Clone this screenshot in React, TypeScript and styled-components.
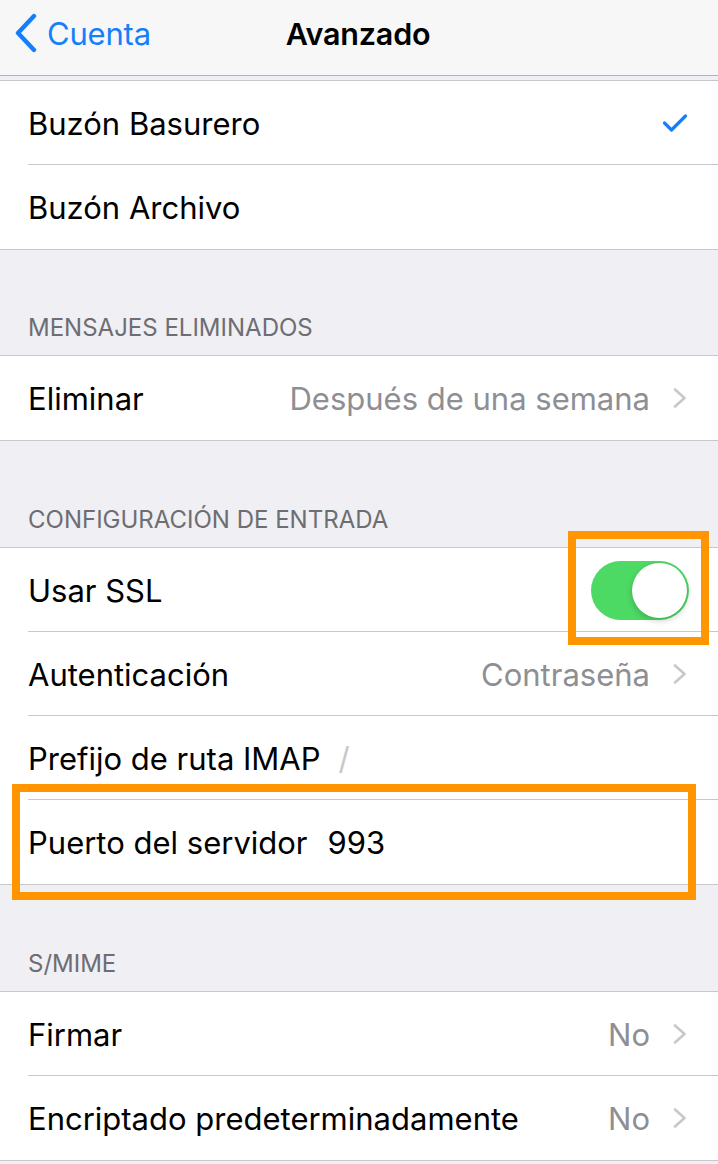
import React from "react";
import styled, { createGlobalStyle } from "styled-components";

const Global = createGlobalStyle`
  html, body { margin: 0; padding: 0; background: #efeff4; }
  body { font-family: Inter, "Liberation Sans", Arial, sans-serif; -webkit-font-smoothing: antialiased; }
  * { box-sizing: border-box; }
`;

const Page = styled.div`
  width: 718px;
  height: 1164px;
  overflow: hidden;
  background: #efeff4;
  display: flex;
  flex-direction: column;
`;

const NavBar = styled.header`
  height: 76px;
  flex: none;
  background: #f7f7f7;
  border-bottom: 1px solid #b4b4b6;
  display: grid;
  grid-template-columns: 1fr auto 1fr;
  align-items: center;
  padding-bottom: 9px;
`;

const BackButton = styled.div`
  display: flex;
  align-items: center;
  gap: 9px;
  padding-left: 14px;
  color: #157efb;
  font-size: 31px;
  letter-spacing: -0.2px;
`;

const Title = styled.div`
  font-size: 30.5px;
  font-weight: 600;
  color: #000;
  letter-spacing: -0.2px;
  transform: translateX(-1px);
`;

const TopGap = styled.div`
  height: 4px;
  flex: none;
`;

const Section = styled.section`
  background: #fff;
  border-top: 1px solid #c8c7cc;
  border-bottom: 1px solid #c8c7cc;
  flex: none;
`;

const SectionHeader = styled.div<{ $h?: number }>`
  height: ${(p) => p.$h ?? 106}px;
  flex: none;
  display: flex;
  align-items: flex-end;
  padding: 0 0 13px 28px;
  color: #6d6d72;
  font-size: 24px;
  letter-spacing: 0;
`;

const Row = styled.div<{ $last?: boolean }>`
  position: relative;
  height: 84px;
  display: flex;
  align-items: center;
  padding: 0 28px 0 28px;
  font-size: 31px;
  color: #000;
  &::after {
    content: "";
    display: ${(p) => (p.$last ? "none" : "block")};
    position: absolute;
    left: 28px;
    right: 0;
    bottom: 0;
    height: 1px;
    background: #c8c7cc;
  }
`;

const Label = styled.span`
  flex: none;
  white-space: nowrap;
`;

const Inline = styled.span<{ $muted?: boolean }>`
  margin-left: ${(p) => (p.$muted ? 18 : 20)}px;
  color: ${(p) => (p.$muted ? "#c7c7cd" : "#000")};
`;

const Spacer = styled.span`
  flex: 1;
`;

const Value = styled.span`
  color: #8e8e93;
  white-space: nowrap;
  margin-right: 22px;
`;

const SwitchTrack = styled.div`
  position: relative;
  width: 98px;
  height: 59px;
  border-radius: 30px;
  background: #4cd964;
  margin-right: 1px;
`;

const SwitchKnob = styled.div`
  position: absolute;
  right: 2px;
  top: 2px;
  width: 55px;
  height: 55px;
  border-radius: 50%;
  background: #fff;
  box-shadow: 0 3px 6px rgba(0, 0, 0, 0.18), 0 0 0 0.5px rgba(0, 0, 0, 0.06);
`;

const Highlight = styled.div<{ $top: number; $left: number; $width: number; $height: number }>`
  position: absolute;
  top: ${(p) => p.$top}px;
  left: ${(p) => p.$left}px;
  width: ${(p) => p.$width}px;
  height: ${(p) => p.$height}px;
  border: 8px solid #ff9500;
  pointer-events: none;
  z-index: 2;
`;

const Chevron = () => (
  <svg width="16" height="20" viewBox="0 0 16 20" style={{ marginRight: 2 }}>
    <path d="M3 1.5 L12.5 10 L3 18.5" fill="none" stroke="#c7c7cc" strokeWidth="2.6" strokeLinecap="round" strokeLinejoin="round" />
  </svg>
);

const BackChevron = () => (
  <svg width="24" height="40" viewBox="0 0 24 40">
    <path d="M20 3 L4 20 L20 37" fill="none" stroke="#157efb" strokeWidth="4.4" strokeLinecap="round" strokeLinejoin="round" />
  </svg>
);

const Check = () => (
  <svg width="26" height="20" viewBox="0 0 26 20" style={{ marginRight: 2 }}>
    <path d="M2.5 10 L9.5 17 L23.5 3" fill="none" stroke="#157efb" strokeWidth="3.2" strokeLinecap="round" strokeLinejoin="round" />
  </svg>
);

export default function App() {
  return (
    <Page>
      <Global />
      <NavBar>
        <BackButton>
          <BackChevron />
          <span>Cuenta</span>
        </BackButton>
        <Title>Avanzado</Title>
        <div />
      </NavBar>
      <TopGap />
      <Section>
        <Row>
          <Label>Buzón Basurero</Label>
          <Spacer />
          <Check />
        </Row>
        <Row $last>
          <Label>Buzón Archivo</Label>
        </Row>
      </Section>

      <SectionHeader $h={105}>MENSAJES ELIMINADOS</SectionHeader>
      <Section>
        <Row $last>
          <Label>Eliminar</Label>
          <Spacer />
          <Value>Después de una semana</Value>
          <Chevron />
        </Row>
      </Section>

      <SectionHeader>CONFIGURACIÓN DE ENTRADA</SectionHeader>
      <Section>
        <Row>
          <Label>Usar SSL</Label>
          <Spacer />
          <SwitchTrack>
            <SwitchKnob />
          </SwitchTrack>
          <Highlight $top={-17} $left={568} $width={141} $height={114} />
        </Row>
        <Row>
          <Label>Autenticación</Label>
          <Spacer />
          <Value>Contraseña</Value>
          <Chevron />
        </Row>
        <Row>
          <Label>Prefijo de ruta IMAP</Label>
          <Inline $muted>/</Inline>
        </Row>
        <Row $last>
          <Label>Puerto del servidor</Label>
          <Inline>993</Inline>
          <Highlight $top={-16} $left={12} $width={684} $height={116} />
        </Row>
      </Section>

      <SectionHeader>S/MIME</SectionHeader>
      <Section>
        <Row>
          <Label>Firmar</Label>
          <Spacer />
          <Value>No</Value>
          <Chevron />
        </Row>
        <Row $last>
          <Label>Encriptado predeterminadamente</Label>
          <Spacer />
          <Value>No</Value>
          <Chevron />
        </Row>
      </Section>
    </Page>
  );
}
